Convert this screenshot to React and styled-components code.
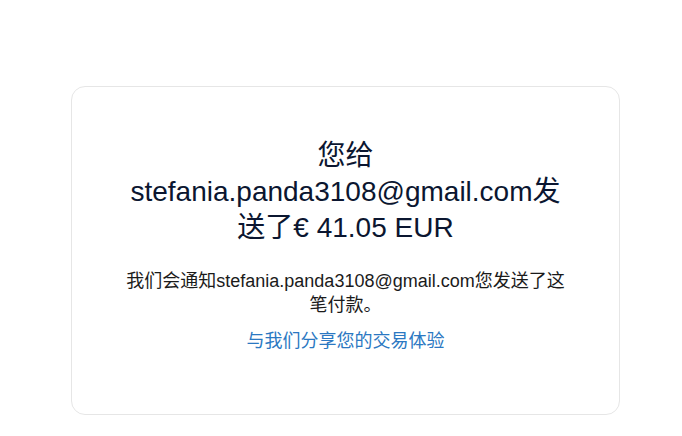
import React from "react";
import styled, { createGlobalStyle } from "styled-components";

const Global = createGlobalStyle`
  html, body { margin: 0; padding: 0; background: #ffffff; }
  body { font-family: "Liberation Sans", Arial, "Noto Sans CJK SC", sans-serif; }
`;

const Page = styled.div`
  padding: 86px 62px 0 71px;
  display: flex;
  justify-content: flex-start;
`;

const Card = styled.section`
  box-sizing: border-box;
  width: 549px;
  height: 329px;
  border: 1px solid #e6e6e6;
  border-radius: 14px;
  padding: 51px 20px 0;
  display: flex;
  flex-direction: column;
  align-items: center;
  text-align: center;
`;

const Heading = styled.h1`
  margin: 0;
  max-width: 446px;
  font-family: "Liberation Sans", Arial, "Noto Sans CJK SC", sans-serif;
  font-size: 28px;
  font-weight: 400;
  line-height: 36px;
  color: #0b1630;
`;

const Body = styled.p`
  margin: 24px 0 0;
  max-width: 446px;
  font-size: 18px;
  line-height: 23.5px;
  color: #1b1b1b;
`;

const Link = styled.a`
  margin-top: 13px;
  font-size: 18px;
  line-height: 23px;
  color: #2b78c2;
  text-decoration: none;
  cursor: pointer;
`;

export default function App() {
  return (
    <>
      <Global />
      <Page>
        <Card>
          <Heading>您给 stefania.panda3108@gmail.com发送了€ 41.05 EUR</Heading>
          <Body>我们会通知stefania.panda3108@gmail.com您发送了这笔付款。</Body>
          <Link href="#">与我们分享您的交易体验</Link>
        </Card>
      </Page>
    </>
  );
}
